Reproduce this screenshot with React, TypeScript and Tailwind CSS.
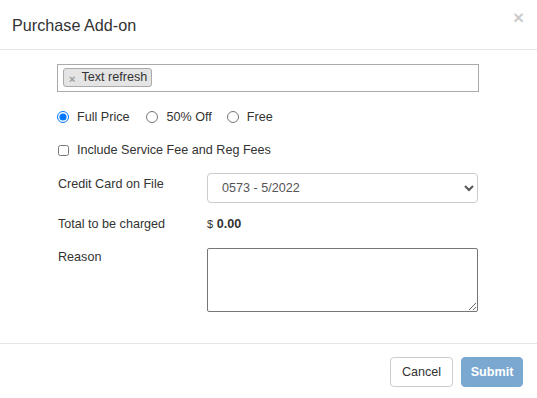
import React from "react";

export default function App() {
  return (
    <div
      className="w-[537px] h-[398px] bg-white text-[#333] text-[12.6px] leading-[18px] flex flex-col overflow-hidden"
      style={{ fontFamily: '"Liberation Sans", Arial, sans-serif' }}
    >
      {/* Header */}
      <div className="h-[50px] border-b border-[#e5e5e5] flex items-start px-[12px]">
        <h4 className="flex-1 text-[16.2px] leading-[23px] mt-[14px] text-[#333]">Purchase Add-on</h4>
        <button className="mt-[8px] mr-[1px] text-[19px] leading-[19px] font-bold text-black opacity-20">
          ×
        </button>
      </div>

      {/* Body */}
      <div className="h-[293px] pt-[14px] pl-[57px] pr-[58px]">
        {/* multi select */}
        <div className="h-[28px] border border-[#aaa] flex items-start pl-[5px] pt-[3px]">
          <span className="h-[19px] flex items-center border border-[#aaa] bg-[#e4e4e4] rounded-[3px] pl-[5px] pr-[4px]">
            <span className="text-[#999] font-bold text-[11px] leading-[11px] mt-[4px] mr-[6px]">×</span>
            <span className="leading-[17px]">Text refresh</span>
          </span>
        </div>

        {/* radios */}
        <div className="mt-[17px] h-[16px] flex items-center">
          <label className="flex items-center">
            <input type="radio" name="price" defaultChecked className="w-[12px] h-[12px] m-0" />
            <span className="ml-[8px]">Full Price</span>
          </label>
          <label className="flex items-center ml-[17px]">
            <input type="radio" name="price" className="w-[12px] h-[12px] m-0" />
            <span className="ml-[8px]">50% Off</span>
          </label>
          <label className="flex items-center ml-[15px]">
            <input type="radio" name="price" className="w-[12px] h-[12px] m-0" />
            <span className="ml-[8px]">Free</span>
          </label>
        </div>

        {/* checkbox */}
        <label className="mt-[17px] h-[16px] flex items-center">
          <input type="checkbox" className="w-[11px] h-[11px] m-0 ml-[1px]" />
          <span className="ml-[8px]">Include Service Fee and Reg Fees</span>
        </label>

        {/* credit card */}
        <div className="mt-[15px] flex items-start">
          <div className="w-[150px] pl-[1px] pt-[2px]">Credit Card on File</div>
          <select className="w-[271px] h-[30px] border border-[#ccc] rounded-[4px] pl-[10px] pr-[8px] bg-white text-[#555]">
            <option>0573 - 5/2022</option>
          </select>
        </div>

        {/* total */}
        <div className="mt-[12px] flex items-start">
          <div className="w-[150px] pl-[1px]">Total to be charged</div>
          <div>
            <span className="text-[11px]">$</span>{" "}
            <span className="font-bold">0.00</span>
          </div>
        </div>

        {/* reason */}
        <div className="mt-[15px] flex items-start">
          <div className="w-[150px] pl-[1px]">Reason</div>
          <textarea className="w-[271px] h-[64px] border border-[#767676] rounded-[2px]" />
        </div>
      </div>

      {/* Footer */}
      <div className="border-t border-[#e5e5e5] flex justify-end gap-[8px] pt-[13px] pr-[14px]">
        <button className="w-[63px] h-[30px] border border-[#ccc] rounded-[4px] bg-white text-[#333]">
          Cancel
        </button>
        <button className="w-[62px] h-[30px] border border-[#7aa8d0] rounded-[4px] bg-[#7aa8d0] text-white font-bold">
          Submit
        </button>
      </div>
    </div>
  );
}
